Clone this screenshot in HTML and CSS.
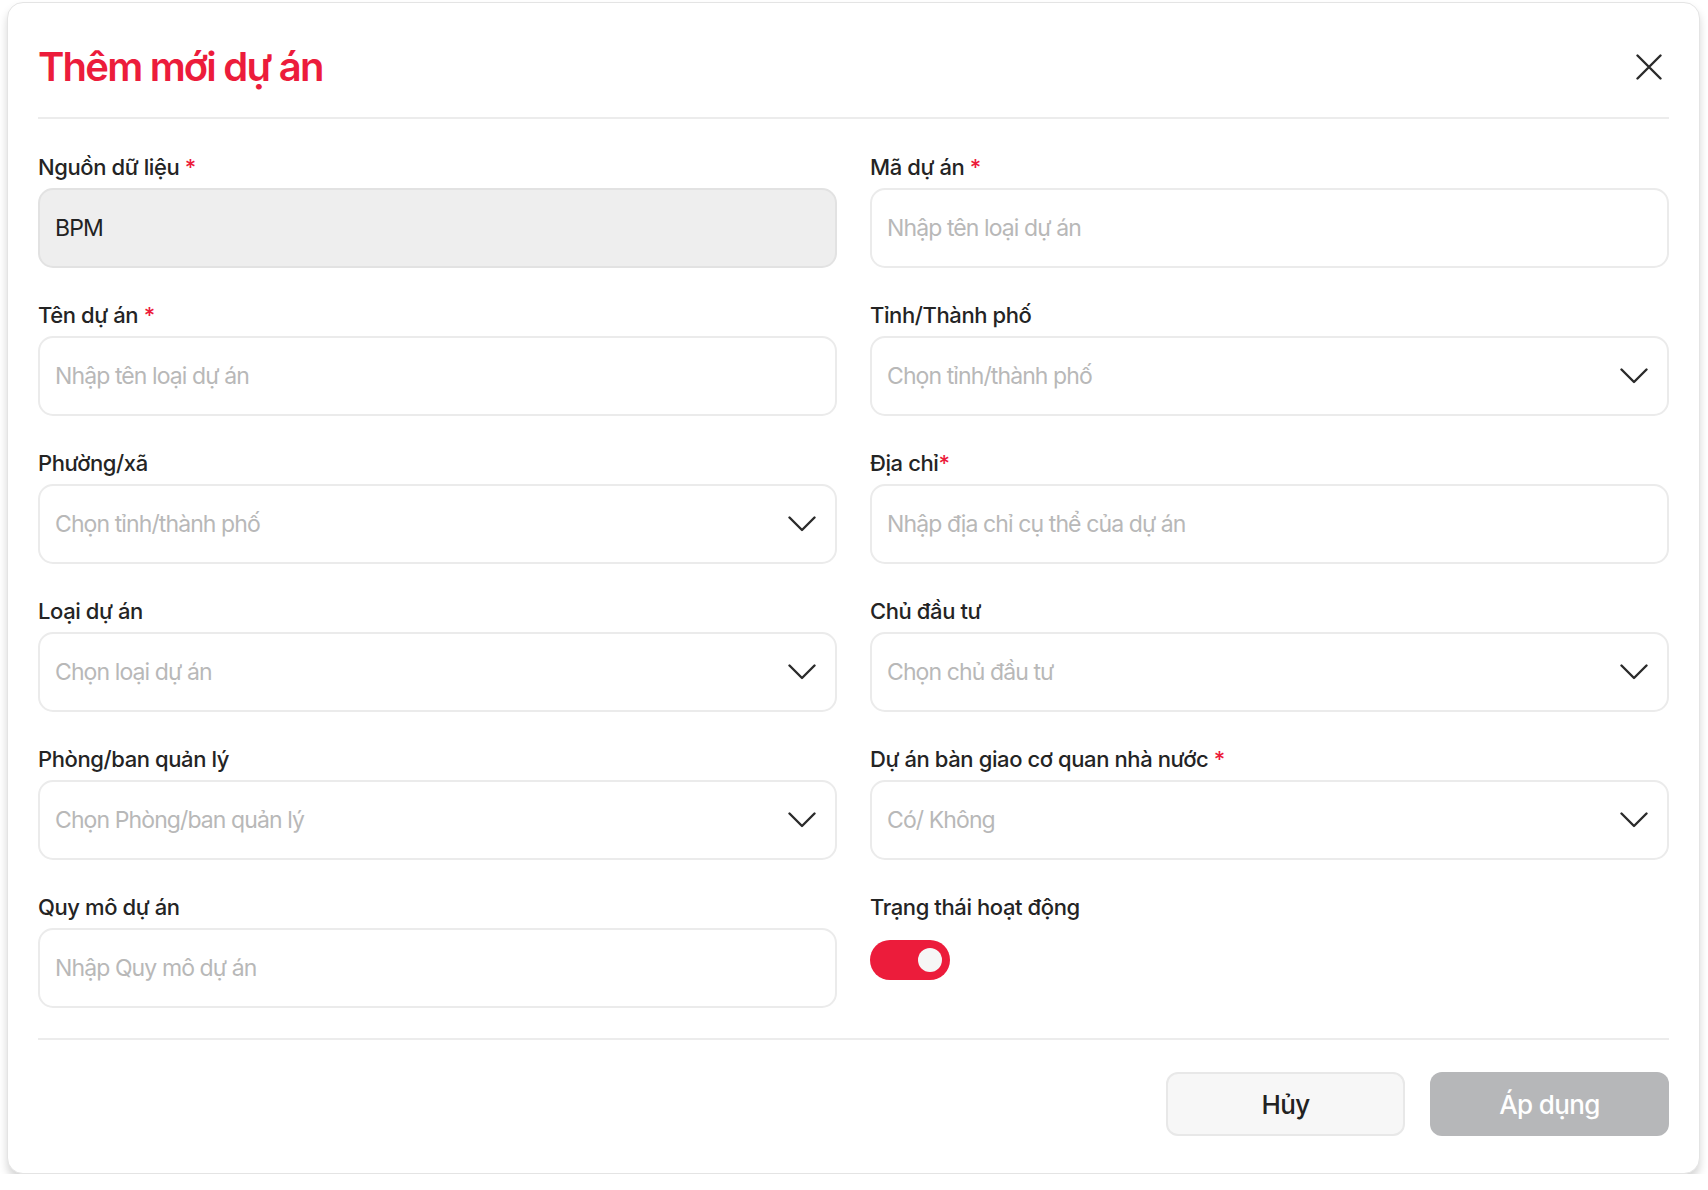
FILE: index.html
```html
<!DOCTYPE html>
<html lang="vi">
<head>
    <meta charset="UTF-8">
    <meta name="viewport" content="width=device-width, initial-scale=1.0">
    <title>Thêm mới dự án</title>
    <link rel="stylesheet" href="styles.css">
</head>
<body>
    <div class="modal">
        <div class="modal-header">
            <h1 class="modal-title">Thêm mới dự án</h1>
            <button class="close-btn" aria-label="Đóng">
                <svg width="26" height="26" viewBox="0 0 26 26" fill="none" stroke="#2b2b2b" stroke-width="2.4" stroke-linecap="round">
                    <path d="M1.5 1.5L24.5 24.5M24.5 1.5L1.5 24.5"/>
                </svg>
            </button>
        </div>

        <form class="form-grid">
            <div class="field">
                <label>Nguồn dữ liệu <span class="req">*</span></label>
                <input class="control disabled" type="text" value="BPM" disabled>
            </div>
            <div class="field">
                <label>Mã dự án <span class="req">*</span></label>
                <input class="control" type="text" placeholder="Nhập tên loại dự án">
            </div>

            <div class="field">
                <label>Tên dự án <span class="req">*</span></label>
                <input class="control" type="text" placeholder="Nhập tên loại dự án">
            </div>
            <div class="field">
                <label>Tỉnh/Thành phố</label>
                <div class="control select">
                    <span class="placeholder">Chọn tỉnh/thành phố</span>
                    <svg class="chevron" width="28" height="16" viewBox="0 0 28 16" fill="none" stroke="#2b2b2b" stroke-width="2.4" stroke-linecap="round" stroke-linejoin="round"><path d="M1.5 1.5L14 14L26.5 1.5"/></svg>
                </div>
            </div>

            <div class="field">
                <label>Phường/xã</label>
                <div class="control select">
                    <span class="placeholder">Chọn tỉnh/thành phố</span>
                    <svg class="chevron" width="28" height="16" viewBox="0 0 28 16" fill="none" stroke="#2b2b2b" stroke-width="2.4" stroke-linecap="round" stroke-linejoin="round"><path d="M1.5 1.5L14 14L26.5 1.5"/></svg>
                </div>
            </div>
            <div class="field">
                <label>Địa chỉ<span class="req">*</span></label>
                <input class="control" type="text" placeholder="Nhập địa chỉ cụ thể của dự án">
            </div>

            <div class="field">
                <label>Loại dự án</label>
                <div class="control select">
                    <span class="placeholder">Chọn loại dự án</span>
                    <svg class="chevron" width="28" height="16" viewBox="0 0 28 16" fill="none" stroke="#2b2b2b" stroke-width="2.4" stroke-linecap="round" stroke-linejoin="round"><path d="M1.5 1.5L14 14L26.5 1.5"/></svg>
                </div>
            </div>
            <div class="field">
                <label>Chủ đầu tư</label>
                <div class="control select">
                    <span class="placeholder">Chọn chủ đầu tư</span>
                    <svg class="chevron" width="28" height="16" viewBox="0 0 28 16" fill="none" stroke="#2b2b2b" stroke-width="2.4" stroke-linecap="round" stroke-linejoin="round"><path d="M1.5 1.5L14 14L26.5 1.5"/></svg>
                </div>
            </div>

            <div class="field">
                <label>Phòng/ban quản lý</label>
                <div class="control select">
                    <span class="placeholder">Chọn Phòng/ban quản lý</span>
                    <svg class="chevron" width="28" height="16" viewBox="0 0 28 16" fill="none" stroke="#2b2b2b" stroke-width="2.4" stroke-linecap="round" stroke-linejoin="round"><path d="M1.5 1.5L14 14L26.5 1.5"/></svg>
                </div>
            </div>
            <div class="field">
                <label>Dự án bàn giao cơ quan nhà nước <span class="req">*</span></label>
                <div class="control select">
                    <span class="placeholder">Có/ Không</span>
                    <svg class="chevron" width="28" height="16" viewBox="0 0 28 16" fill="none" stroke="#2b2b2b" stroke-width="2.4" stroke-linecap="round" stroke-linejoin="round"><path d="M1.5 1.5L14 14L26.5 1.5"/></svg>
                </div>
            </div>

            <div class="field">
                <label>Quy mô dự án</label>
                <input class="control" type="text" placeholder="Nhập Quy mô dự án">
            </div>
            <div class="field">
                <label>Trạng thái hoạt động</label>
                <div class="toggle on"><span class="knob"></span></div>
            </div>
        </form>

        <div class="modal-footer">
            <button class="btn btn-cancel">Hủy</button>
            <button class="btn btn-apply" disabled>Áp dụng</button>
        </div>
    </div>
</body>
</html>
```

FILE: styles.css
```css
* {
    margin: 0;
    padding: 0;
    box-sizing: border-box;
}

body {
    font-family: Inter, "Noto Sans", sans-serif;
    background-color: #ffffff;
    color: #222222;
}

.modal {
    margin: 2px 0 0 7px;
    width: 1693px;
    height: 1172px;
    background-color: #fff;
    border: 1px solid #e4e4e4;
    border-radius: 16px;
    box-shadow: 0 6px 9px rgba(0, 0, 0, 0.17);
    padding: 0 30px;
    display: flex;
    flex-direction: column;
}

.modal-header {
    display: flex;
    justify-content: space-between;
    align-items: center;
    padding: 40px 0 26px;
    border-bottom: 2px solid #ececec;
}

.modal-title {
    font-size: 40px;
    line-height: 48px;
    font-weight: 600;
    color: #ec1c3b;
    letter-spacing: -1.8px;
}

.close-btn {
    width: 40px;
    height: 40px;
    border: none;
    background: none;
    display: flex;
    align-items: center;
    justify-content: center;
    cursor: pointer;
}

.form-grid {
    display: grid;
    grid-template-columns: 1fr 1fr;
    column-gap: 33px;
    row-gap: 33px;
    padding: 34px 0 30px;
    border-bottom: 2px solid #ececec;
}

.field {
    display: flex;
    flex-direction: column;
}

.field label {
    font-size: 22px;
    line-height: 28px;
    font-weight: 500;
    color: #242424;
    letter-spacing: -0.4px;
    margin-bottom: 7px;
}

.req {
    color: #ec1c3b;
}

.control {
    height: 80px;
    border: 2px solid #ebebeb;
    border-radius: 15px;
    background-color: #fff;
    padding: 0 15px;
    font-family: inherit;
    font-size: 23px;
    letter-spacing: -0.9px;
    color: #222;
    outline: none;
    width: 100%;
}

.control::placeholder {
    color: #b8b8b8;
}

.control.disabled {
    background-color: #eeeeee;
    border-color: #e2e2e2;
    color: #222;
}

.select {
    display: flex;
    align-items: center;
    justify-content: space-between;
    padding-right: 19px;
}

.placeholder {
    color: #b8b8b8;
}

.toggle {
    margin-top: 12px;
    width: 80px;
    height: 40px;
    border-radius: 20px;
    background-color: #d5d5d5;
    display: flex;
    align-items: center;
    padding: 0 8px;
}

.toggle.on {
    background-color: #ec1c3b;
    justify-content: flex-end;
}

.knob {
    width: 24px;
    height: 24px;
    border-radius: 50%;
    background-color: #f6f6f6;
}

.modal-footer {
    display: flex;
    justify-content: flex-end;
    gap: 25px;
    padding-top: 32px;
}

.btn {
    width: 239px;
    height: 64px;
    border-radius: 12px;
    font-family: inherit;
    font-size: 26px;
    font-weight: 500;
    letter-spacing: -0.6px;
    cursor: pointer;
}

.btn-cancel {
    background-color: #f7f7f7;
    border: 2px solid #e8e8e8;
    color: #222;
}

.btn-apply {
    background-color: #b6b7b9;
    border: none;
    color: #fff;
}
```
